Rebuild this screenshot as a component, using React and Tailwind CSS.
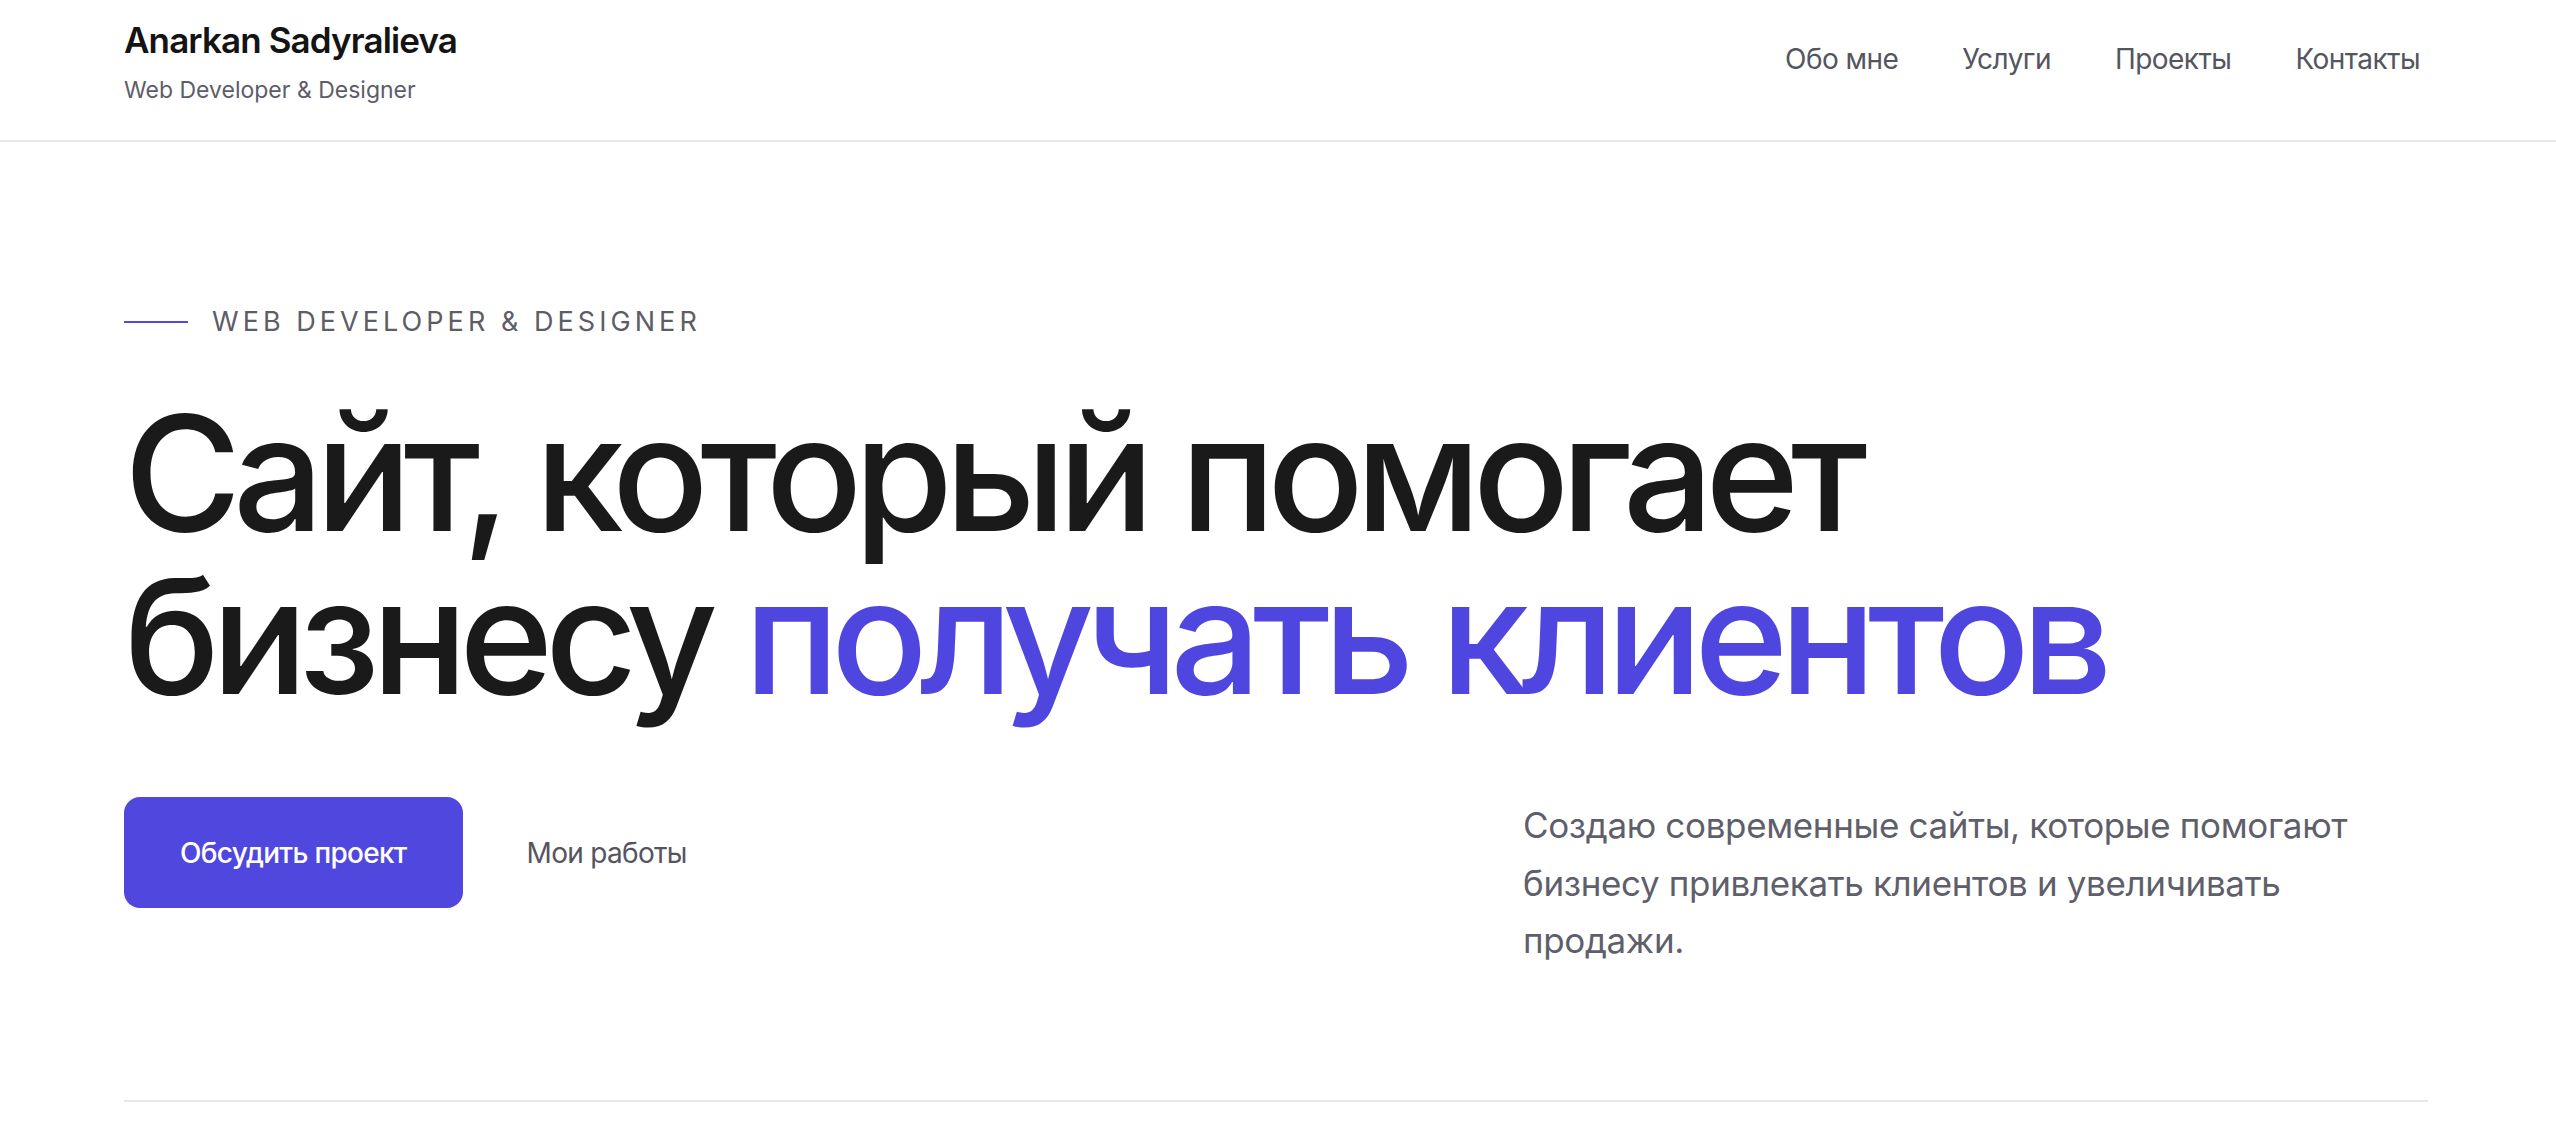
const navLinks = ["Обо мне", "Услуги", "Проекты", "Контакты"];

const font = { fontFamily: "Inter, 'Noto Sans', sans-serif" };

const Header = () => {
  return (
    <header className="h-[142px] border-b-2 border-[#e7e7e9]">
      <div className="ml-[124px] w-[2304px] flex items-start justify-between">
        <div className="pt-[19px]">
          <div className="text-[35px] leading-[42px] font-semibold tracking-tight text-[#141414]">
            Anarkan Sadyralieva
          </div>
          <div className="mt-[13px] text-[23px] leading-[33px] text-[#5d5d68]">
            Web Developer &amp; Designer
          </div>
        </div>
        <nav className="mt-[38px] flex gap-[64px] pr-[8px]">
          {navLinks.map((link) => (
            <a
              key={link}
              href="#"
              className="text-[28px] leading-[43px] tracking-[-0.02em] text-[#55555f]"
            >
              {link}
            </a>
          ))}
        </nav>
      </div>
    </header>
  );
};

const Hero = () => {
  return (
    <section className="ml-[124px] w-[2304px] pt-[160px] pb-[130px] border-b-2 border-[#e7e7e9]">
      <div className="flex items-center gap-[24px]">
        <span className="block w-[64px] h-[2px] bg-[#4f46e5]" />
        <span className="text-[27px] leading-[40px] tracking-[0.15em] text-[#5d5d68]">
          WEB DEVELOPER &amp; DESIGNER
        </span>
      </div>

      <h1 className="mt-[50px] text-[160px] leading-[163px] font-[550] tracking-[-0.052em] text-[#1a1a1a]">
        Сайт, который помогает
        <br />
        бизнесу <span className="text-[#4f46e0]">получать клиентов</span>
      </h1>

      <div className="mt-[79px] flex items-start justify-between">
        <div className="flex items-center gap-[64px]">
          <a
            href="#"
            className="h-[111px] px-[56px] flex items-center rounded-[16px] bg-[#4f47de] text-white text-[28px] font-medium tracking-[-0.025em]"
          >
            Обсудить проект
          </a>
          <a
            href="#"
            className="text-[28px] tracking-[-0.025em] text-[#55555f]"
          >
            Мои работы
          </a>
        </div>
        <p className="w-[905px] text-[35px] leading-[57.6px] tracking-[-0.01em] text-[#5f5f6b]">
          Создаю современные сайты, которые помогают
          <br />
          бизнесу привлекать клиентов и увеличивать
          <br />
          продажи.
        </p>
      </div>
    </section>
  );
};

export default function App() {
  return (
    <div className="min-h-screen bg-white" style={font}>
      <Header />
      <Hero />
    </div>
  );
}
